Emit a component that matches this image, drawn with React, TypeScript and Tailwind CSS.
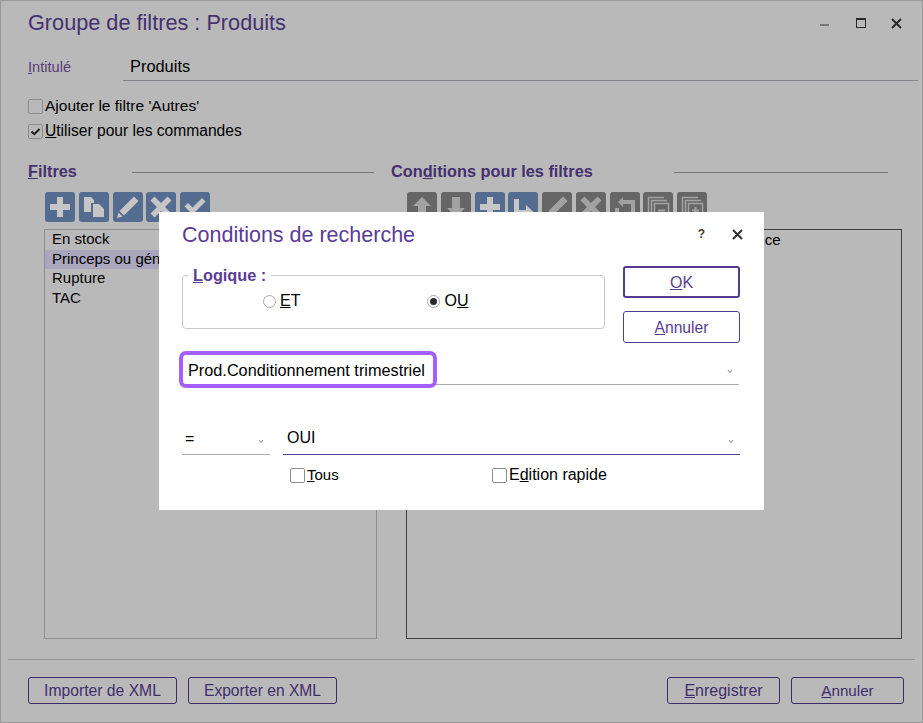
import type { ReactNode } from "react";

const FONT = "font-['Liberation_Sans',Arial,sans-serif]";

function ToolButton({ tone, children }: { tone: "blue" | "gray"; children: ReactNode }) {
  return (
    <div
      className={
        "w-[30px] h-[30px] rounded-[3px] shrink-0 " +
        (tone === "blue" ? "bg-[#546c90] text-[#c6c6c6]" : "bg-[#666666] text-[#a2a2a2]")
      }
    >
      <svg viewBox="0 0 30 30" className="w-[30px] h-[30px]" fill="currentColor">
        {children}
      </svg>
    </div>
  );
}

const Plus = () => <path d="M12 5h6v7h7v6h-7v7h-6v-7H5v-6h7z" />;
const Cross = () => <path d="M8.500 4.500 15 11l6.500-6.500 4 4L19 15l6.500 6.500-4 4L15 19l-6.500 6.500-4-4L11 15 4.500 8.500z" />;
const Pencil = () => <path d="M21 4.500 25.500 9 11 23.500 6.500 19zM5.500 20.500l4 4L4 26z" />;
const Check = () => <path d="M4.500 14.500 8 11l4.500 4.500L22 6l3.500 3.500L12.500 22.500z" />;
const Copy = () => <path d="M5 5h7l3 3v3h-3v9H5zM14 12h6l5 5v8H14z" />;
const Up = () => <path d="M15 5l9 9h-5v11h-8V14H6z" />;
const Down = () => <path d="M11 5h8v11h5l-9 9-9-9h5z" />;
const Indent = () => <path d="M6 7h5v11h7v-5l8 7.500-8 7.500v-5H6z" />;
const Undo = () => <path d="M5 16h4v9H5zM13 5v3h12v17h-4V12H13v3L8 10z" />;
const Stack = ({ plus }: { plus?: boolean }) => (
  <g fill="none" stroke="currentColor" strokeWidth="1.500">
    <path d="M5.500 21V5.500H21" />
    <path d="M8.500 24V8.500H24" />
    <rect x="11.500" y="11.500" width="14" height="14" />
    <path d="M15 18.500h7" strokeWidth="2" />
    {plus && <path d="M18.500 15v7" strokeWidth="2" />}
  </g>
);

function Box({ checked }: { checked?: boolean }) {
  return (
    <span className="w-[15px] h-[15px] rounded-[2px] border border-[#8d8d8d] shrink-0 flex items-center justify-center">
      {checked && (
        <svg viewBox="0 0 13 13" className="w-[13px] h-[13px]" fill="none" stroke="#1c1c1c" strokeWidth="2">
          <path d="M2.500 6.500 5.300 9.200 10.500 4" />
        </svg>
      )}
    </span>
  );
}

function GhostButton({ children, width }: { children: ReactNode; width: string }) {
  return (
    <div
      className={
        "h-[27px] rounded-[3px] border border-[#3a2a66] text-[#3f2d6d] flex items-center justify-center " +
        width
      }
    >
      {children}
    </div>
  );
}

function Chevron({ className }: { className?: string }) {
  return (
    <svg viewBox="0 0 6 5" className={"w-[6px] h-[5px] " + (className ?? "")} fill="none" stroke="#a5a5a5" strokeWidth="1.200">
      <path d="M1 1 3 3.500 5 1" />
    </svg>
  );
}

function Radio({ checked }: { checked?: boolean }) {
  return (
    <span className="w-[13px] h-[13px] rounded-full border border-[#a8a8a8] flex items-center justify-center">
      {checked && <span className="w-[7px] h-[7px] rounded-full bg-[#2a2a2a]" />}
    </span>
  );
}

function ListRow({ selected, children }: { selected?: boolean; children: ReactNode }) {
  return (
    <div className={"pl-[7px] pb-[2px] leading-[17.500px]" + (selected ? " bg-[#aaa6bd]" : "")}>
      {children}
    </div>
  );
}

function Dialog() {
  return (
    <div className="absolute left-[158px] top-[211px] w-[605px] h-[298px] bg-white flex flex-col pl-[23px] pr-[24px] text-[16px] text-black leading-[18px]">
      <div className="flex items-center h-[44px]">
        <span className="text-[#5a3d94] text-[21.500px] leading-[26px] flex-1 mt-[1px]">Conditions de recherche</span>
        <span className="text-[#3a3a3a] text-[12px] font-bold mr-[27px]">?</span>
        <svg viewBox="0 0 11 11" className="w-[11px] h-[11px] mr-[-3px]" stroke="#333333" strokeWidth="2">
          <path d="M1 1l9 9M10 1l-9 9" />
        </svg>
      </div>

      <div className="flex mt-[10px]">
        <div className="relative w-[423px] h-[54px] mt-[9px] border border-[#c9c9c9] rounded-[4px] flex items-center">
          <span className="absolute left-[5px] top-[-10px] bg-white px-[5px] text-[#5a3d94] font-bold text-[16.300px]">
            <u>L</u>ogique :
          </span>
          <div className="flex items-center gap-[4px] ml-[80px] mb-[2px]">
            <Radio />
            <span><u>E</u>T</span>
          </div>
          <div className="flex items-center gap-[4px] ml-[127px] mb-[2px]">
            <Radio checked />
            <span>O<u>U</u></span>
          </div>
        </div>
        <div className="ml-[18px] w-[117px] flex flex-col gap-[13px]">
          <div className="h-[32px] rounded-[3px] border-2 border-[#533b8f] text-[#5a3d94] flex items-center justify-center pt-[2px]"><span><u>O</u>K</span></div>
          <div className="h-[32px] rounded-[3px] border border-[#533b8f] text-[#5a3d94] text-[15.700px] flex items-center justify-center pt-[2px]"><span><u>A</u>nnuler</span></div>
        </div>
      </div>

      <div className="relative mt-[10px] h-[32px] w-[557px] border-b border-[#a9a9ae] flex items-center justify-end pr-[6px]">
        <Chevron className="mt-[5px]" />
        <div className="absolute left-[-3px] top-[-2px] w-[258px] h-[37px] bg-white rounded-[7px] border-[4px] border-[#a55ffb] flex items-center pl-[5px] pt-[1px] text-[16.270px] whitespace-nowrap">
          Prod.Conditionnement trimestriel
        </div>
      </div>

      <div className="flex gap-[13px] mt-[38px]">
        <div className="w-[88px] h-[32px] border-b border-[#a9a9ae] flex items-center justify-between pl-[3px] pr-[6px]">
          <span>=</span>
          <Chevron className="mt-[5px]" />
        </div>
        <div className="w-[457px] h-[32px] border-b border-[#5a3d94] flex items-center justify-between pl-[4px] pr-[6px]">
          <span className="mb-[2px]">OUI</span>
          <Chevron className="mt-[5px]" />
        </div>
      </div>

      <div className="flex mt-[11px] ml-[108px]">
        <div className="flex items-center gap-[2px] w-[202px]">
          <Box />
          <span className="text-[15px]"><u>T</u>ous</span>
        </div>
        <div className="flex items-center gap-[2px]">
          <Box />
          <span>E<u>d</u>ition rapide</span>
        </div>
      </div>
    </div>
  );
}

export default function App() {
  return (
    <div className={"relative w-[923px] h-[723px] overflow-hidden bg-[#b9b9b9] border border-[#999999] text-[16px] leading-[18px] text-black " + FONT}>
      <div className="flex flex-col h-full pt-[9px]">
        <div className="flex items-center pl-[27px] pr-[20px] h-[26px]">
          <span className="text-[#44306f] text-[21.700px] leading-[26px] flex-1">Groupe de filtres : Produits</span>
          <span className="w-[9px] h-[2px] bg-[#777777] mr-[27px] mt-[3px]" />
          <span className="w-[10px] h-[10px] border border-[#2a2a2a] border-t-2 mr-[25px]" />
          <svg viewBox="0 0 11 11" className="w-[11px] h-[11px]" stroke="#2a2a2a" strokeWidth="2">
            <path d="M1 1l9 9M10 1l-9 9" />
          </svg>
        </div>

        <div className="flex mt-[15px] ml-[27px] h-[30px]">
          <span className="w-[95px] text-[#5a3d78] text-[14.600px] pt-[7px]"><u>I</u>ntitulé</span>
          <div className="w-[795px] border-b border-[#828288] pl-[7px] pt-[6px] text-[16.400px]">Produits</div>
        </div>

        <div className="flex items-center gap-[2px] ml-[27px] mt-[16px] h-[18px] text-[15.500px]">
          <Box />
          <span>Ajouter le filtre 'Autres'</span>
        </div>
        <div className="flex items-center gap-[2px] ml-[27px] mt-[7px] h-[18px] text-[15.600px]">
          <Box checked />
          <span><u>U</u>tiliser pour les commandes</span>
        </div>

        <div className="flex mt-[23px] ml-[27px]">
          <div className="w-[349px] flex flex-col">
            <div className="flex items-center h-[18px]">
              <span className="font-bold text-[#44306f] text-[16.300px] leading-[16px] mb-[2px] w-[104px]"><u>F</u>iltres</span>
              <span className="w-[242px] h-px bg-[#777777]" />
            </div>
            <div className="flex gap-[3.750px] ml-[17px] mt-[11px]">
              <ToolButton tone="blue"><Plus /></ToolButton>
              <ToolButton tone="blue"><Copy /></ToolButton>
              <ToolButton tone="blue"><Pencil /></ToolButton>
              <ToolButton tone="blue"><Cross /></ToolButton>
              <ToolButton tone="blue"><Check /></ToolButton>
            </div>
            <div className="ml-[16px] mt-[7px] w-[333px] h-[410px] border border-[#8f8f8f] flex flex-col text-[15px]">
              <ListRow>En stock</ListRow>
              <ListRow selected>Princeps ou génériques</ListRow>
              <ListRow>Rupture</ListRow>
              <ListRow>TAC</ListRow>
            </div>
          </div>
          <div className="ml-[14px] flex-1 flex flex-col">
            <div className="flex items-center h-[18px]">
              <span className="font-bold text-[#44306f] text-[16.300px] leading-[16px] mb-[2px] w-[283px]">Con<u>d</u>itions pour les filtres</span>
              <span className="w-[214px] h-px bg-[#777777]" />
            </div>
            <div className="flex gap-[3.750px] ml-[16px] mt-[11px]">
              <ToolButton tone="gray"><Up /></ToolButton>
              <ToolButton tone="gray"><Down /></ToolButton>
              <ToolButton tone="blue"><Plus /></ToolButton>
              <ToolButton tone="blue"><Indent /></ToolButton>
              <ToolButton tone="gray"><Pencil /></ToolButton>
              <ToolButton tone="gray"><Cross /></ToolButton>
              <ToolButton tone="gray"><Undo /></ToolButton>
              <ToolButton tone="gray"><Stack /></ToolButton>
              <ToolButton tone="gray"><Stack plus /></ToolButton>
            </div>
            <div className="ml-[15px] mt-[7px] w-[496px] h-[410px] border border-[#3e3e3e] text-[15.200px] leading-[19.500px] pl-[7px] whitespace-nowrap overflow-hidden">
              Prod.Conditionnement trimestriel = OUI OU Référence
            </div>
          </div>
        </div>

        <div className="mx-[7px] mt-[20px] h-px bg-[#969696]" />

        <div className="flex mt-[17px] pl-[27px] pr-[18px]">
          <GhostButton width="w-[149px] text-[15.700px]">Importer de XML</GhostButton>
          <div className="ml-[11px]"><GhostButton width="w-[149px] text-[15.600px]">Exporter en XML</GhostButton></div>
          <div className="ml-auto"><GhostButton width="w-[113px]"><span><u>E</u>nregistrer</span></GhostButton></div>
          <div className="ml-[11px]"><GhostButton width="w-[113px] text-[15.200px]"><span><u>A</u>nnuler</span></GhostButton></div>
        </div>
      </div>
      <Dialog />
    </div>
  );
}
